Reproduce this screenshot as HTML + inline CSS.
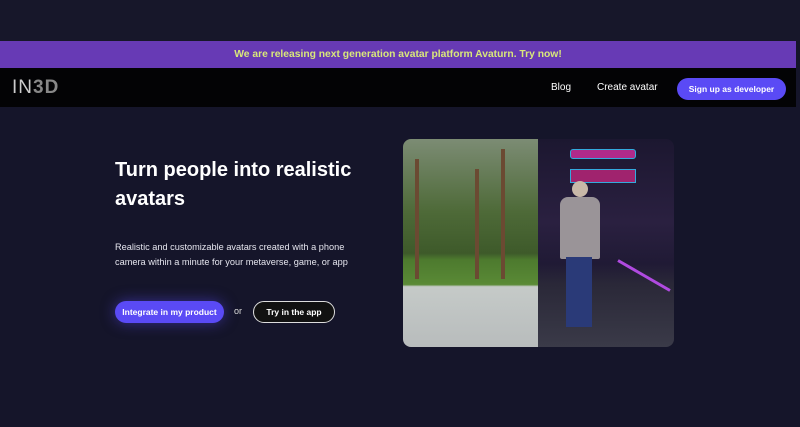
<!DOCTYPE html>
<html><head><style>
*{margin:0;padding:0;box-sizing:border-box}
body{width:800px;height:427px;overflow:hidden;background:#15152a;font-family:"Liberation Sans",sans-serif;position:relative}
.top{position:absolute;left:0;top:0;width:800px;height:41px;background:#17172a}
.promo{position:absolute;left:0;top:41px;width:796px;height:27px;background:#673ab5;color:#d9e87a;font-weight:bold;font-size:10.3px;text-align:center;line-height:27px}
.nav{position:absolute;left:0;top:68px;width:796px;height:39px;background:#030305}
.logo{position:absolute;left:12px;top:9px;font-size:19px;color:#ccc;letter-spacing:1px;font-weight:300}
.logo b{color:#888;font-weight:900}
.nav .l{position:absolute;top:14px;color:#fff;font-size:10px}
.dev{position:absolute;left:677px;top:10px;width:109px;height:22px;border-radius:11px;background:#5a4af5;color:#fff;font-size:8.5px;font-weight:bold;text-align:center;line-height:22px}
h1{position:absolute;left:115px;top:156px;color:#fff;font-size:20px;line-height:29px;font-weight:bold;width:260px}
p{position:absolute;left:115px;top:240px;color:#e5e5ee;font-size:9.2px;line-height:15px;width:250px}
.b1{position:absolute;left:115px;top:301px;width:109px;height:22px;border-radius:11px;background:#5a4af5;color:#fff;font-size:8.5px;font-weight:bold;text-align:center;line-height:22px;box-shadow:0 0 14px rgba(90,74,245,.5)}
.or{position:absolute;left:234px;top:306px;color:#ddd;font-size:9px}
.b2{position:absolute;left:253px;top:301px;width:82px;height:22px;border-radius:11px;border:1px solid #ddd;background:#111;color:#fff;font-size:8.5px;font-weight:bold;text-align:center;line-height:20px}
.img{position:absolute;left:403px;top:139px;width:271px;height:208px;border-radius:8px;overflow:hidden}
.L{position:absolute;left:0;top:0;width:135px;height:208px;background:linear-gradient(#7c8c74 0%,#4e6a38 35%,#3e5a2a 55%,#4d7a2e 58%,#5a8a36 70%,#c5cac8 71%,#b8bcbc 100%)}
.R{position:absolute;left:135px;top:0;width:136px;height:208px;background:linear-gradient(#1c1730 0%,#2a2040 40%,#201a35 60%,#2a2838 70%,#3a3a48 100%)}
</style></head><body>
<div class="top"></div>
<div class="promo">We are releasing next generation avatar platform Avaturn. Try now!</div>
<div class="nav"><div class="logo">IN<b>3D</b></div>
<span class="l" style="left:551px">Blog</span><span class="l" style="left:597px">Create avatar</span>
<div class="dev">Sign up as developer</div></div>
<h1>Turn people into realistic avatars</h1>
<p>Realistic and customizable avatars created with a phone camera within a minute for your metaverse, game, or app</p>
<div class="b1">Integrate in my product</div><span class="or">or</span><div class="b2">Try in the app</div>
<div class="img">
<div class="L">
<div style="position:absolute;left:12px;top:20px;width:4px;height:120px;background:#6b4a32"></div>
<div style="position:absolute;left:72px;top:30px;width:4px;height:110px;background:#6b4a32"></div>
<div style="position:absolute;left:98px;top:10px;width:4px;height:130px;background:#6b4a32"></div>
</div>
<div class="R">
<div style="position:absolute;left:32px;top:10px;width:66px;height:10px;border:1px solid #3ad;background:#b02a8a;border-radius:3px"></div>
<div style="position:absolute;left:32px;top:30px;width:66px;height:14px;border:1px solid #3ad;background:#a0236e"></div>
<div style="position:absolute;left:34px;top:42px;width:16px;height:16px;border-radius:50%;background:#c8b8a8"></div>
<div style="position:absolute;left:22px;top:58px;width:40px;height:62px;background:#9a9498;border-radius:8px 8px 2px 2px"></div>
<div style="position:absolute;left:28px;top:118px;width:26px;height:70px;background:#2a3a78"></div>
<div style="position:absolute;left:76px;top:135px;width:60px;height:3px;background:#b04ae0;transform:rotate(30deg)"></div>
</div>
</div>
</body></html>
